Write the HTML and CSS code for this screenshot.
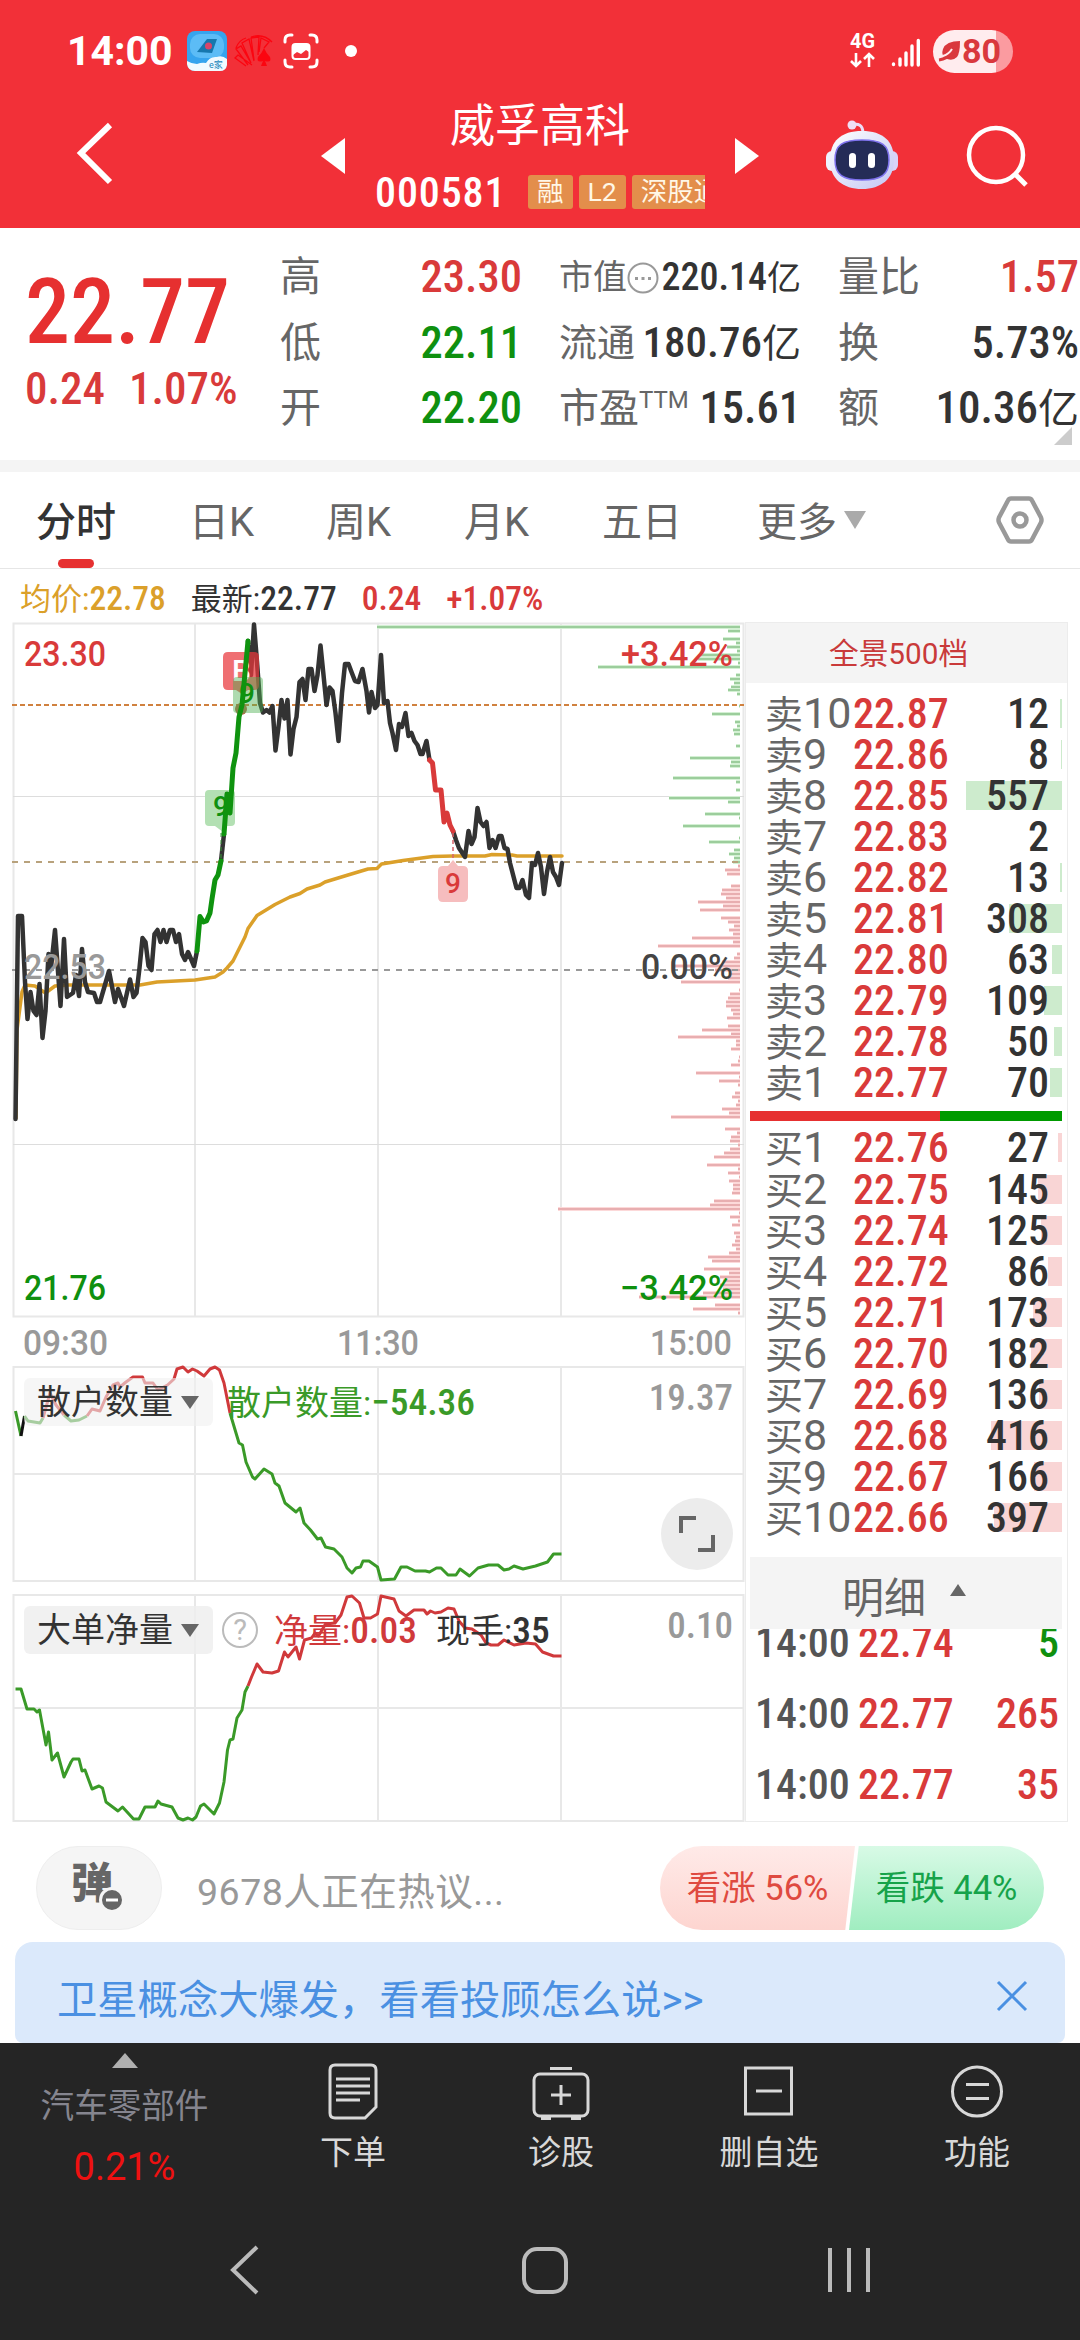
FILE: index.html
```html
<!DOCTYPE html>
<html lang="zh-CN">
<head>
  <meta charset="UTF-8">
  <title>威孚高科 000581</title>
  <link rel="stylesheet" href="styles.css">
</head>
<body>
  <header class="header">
    <div class="status">
      <span class="clock">14:00</span>
      <svg class="app-icon" width="40" height="40" viewBox="0 0 40 40">
        <rect width="40" height="40" rx="8" fill="#36a4ee"/>
        <rect x="3" y="3" width="34" height="24" rx="10" fill="#5cbcf6"/>
        <path d="M10 21 20 8h10l-5 14z" fill="#1677ae"/>
        <circle cx="21.500" cy="15" r="3.500" fill="#d8466a"/>
        <path d="M0 30q5 3 10 3 5-2 9-1 4-7 11-6 5-2 10 2v6q-1 6-7 6H8q-7 0-8-7z" fill="#f1faff"/>
        <text x="22" y="37" font-size="9" fill="#1a86ba">e家</text>
      </svg>
      <svg class="cards-icon" width="40" height="34" viewBox="0 0 40 34" fill="none" stroke="#fb0510" stroke-width="1.300">
        <path d="M12 32 1 24l3-3 14 10M14 31 2 15l5-3 10 17M17 29 8 9l7-4 5 22M20 26 17 4l8-1-1 18M25 18l2-14 8 4-5 6M17 3q12-4 21 5M2 14Q5 6 12 4"/>
        <path d="M30 14q-2 5-6 9-2 6 5 4l-2 5h6l-2-5q7 2 5-4-4-4-6-9z" fill="#fb0510" stroke="none"/>
      </svg>
      <svg class="shot-icon" width="36" height="36" viewBox="0 0 36 36" fill="none" stroke="#fff" stroke-width="3" stroke-linecap="round">
        <path d="M2 9V7q0-5 5-5h2M27 2h2q5 0 5 5v2M34 27v2q0 5-5 5h-2M9 34H7q-5 0-5-5v-2"/>
        <rect x="9.500" y="11" width="17" height="15" rx="3" stroke-width="2"/>
        <path d="M10 12h16v7l-3-2-5 4-4-2-4 3z" fill="#fff" stroke="none"/>
      </svg>
      <i class="dot"></i>
      <svg class="net" width="26" height="36" viewBox="0 0 26 36">
        <text x="0" y="15" font-size="20" font-weight="700" fill="#fff" textLength="25" lengthAdjust="spacingAndGlyphs">4G</text>
        <path d="M6 20v13M1 28l5 5 5-5M19 34V21M14 26l5-5 5 5" fill="none" stroke="#fff" stroke-width="2.600"/>
      </svg>
      <svg class="signal" width="30" height="30" viewBox="0 0 30 30" stroke="#fff" stroke-width="3.400" stroke-linecap="round">
        <path d="M2.500 26v.5M9 21v6M15 15v12M21 8v19M27.300 2.500v24.500"/>
      </svg>
      <div class="battery">
        <svg width="24" height="22" viewBox="0 0 24 22">
          <path d="M22 1q0 12-3 16-5 5-12 1-4-3-2-9 3-8 17-8z" fill="#d9383d"/>
          <path d="M1 20q8-1 15-9" fill="none" stroke="#d9383d" stroke-width="3"/>
          <path d="M5 16q6-2 9-7" fill="none" stroke="#ffecee" stroke-width="2"/>
        </svg>
        <span>80</span>
      </div>
    </div>
    <div class="nav">
      <svg class="back" width="44" height="68" viewBox="0 0 44 68"><path d="M37 6 8 34l29 29" fill="none" stroke="#fff" stroke-width="6"/></svg>
      <svg class="prev" width="24" height="36" viewBox="0 0 24 36"><path d="M24 0v36L0 18z" fill="#fff"/></svg>
      <div class="stock">
        <h1>威孚高科</h1>
        <div class="stock-sub">
          <span class="code">000581</span>
          <span class="tag">融</span><span class="tag">L2</span><span class="tag">深股通</span>
        </div>
      </div>
      <svg class="next" width="24" height="36" viewBox="0 0 24 36"><path d="M0 0v36l24-18z" fill="#fff"/></svg>
      <svg class="robot" width="74" height="72" viewBox="0 0 74 72">
        <defs>
          <linearGradient id="shell" x1="0" y1="0" x2="1" y2="1"><stop offset="0" stop-color="#fff"/><stop offset="1" stop-color="#c3c6f3"/></linearGradient>
        </defs>
        <path d="M27 7q10-3 11 7" fill="none" stroke="#ecdcf6" stroke-width="3"/>
        <circle cx="27" cy="7" r="4.500" fill="#f0dff5"/>
        <rect x="1" y="33" width="12" height="20" rx="6" fill="#eef3ff"/>
        <rect x="61" y="33" width="12" height="20" rx="6" fill="#d9d3f8"/>
        <path d="M37 13c21 0 32 10 32 29S56 71 37 71 5 61 5 42s11-29 32-29z" fill="url(#shell)"/>
        <path d="M37 22c20 0 27 5 27 20s-8 20-27 20-27-5-27-20 7-20 27-20z" fill="#242c57" stroke="#7f73ee" stroke-width="1.500"/>
        <rect x="24" y="35" width="7" height="15" rx="3.500" fill="#fff"/>
        <rect x="43" y="35" width="7" height="15" rx="3.500" fill="#fff"/>
      </svg>
      <svg class="search" width="64" height="64" viewBox="0 0 64 64" fill="none" stroke="#fff" stroke-width="4.500"><circle cx="30" cy="31" r="27"/><path d="M49 50l11 11" stroke-width="5"/></svg>
    </div>
  </header>

  <section class="quote">
    <div class="quote-main">
      <div class="price num">22.77</div>
      <div class="change num"><span>0.24</span><span>1.07%</span></div>
    </div>
    <dl class="quote-col c1">
      <dt>高</dt><dd class="num up">23.30</dd>
      <dt>低</dt><dd class="num down">22.11</dd>
      <dt>开</dt><dd class="num down">22.20</dd>
    </dl>
    <dl class="quote-col c2">
      <dt class="cap">市值<svg width="32" height="32" viewBox="0 0 32 32"><circle cx="16" cy="16" r="14.500" fill="none" stroke="#999" stroke-width="2"/><path d="M8 15h3v3H8zM14.500 15h3v3h-3zM21 15h3v3h-3z" fill="#999"/></svg></dt><dd class="cap"><b class="num">220.14</b>亿</dd>
      <dt class="mid">流通</dt><dd class="mid"><b class="num">180.76</b>亿</dd>
      <dt>市盈<sup>TTM</sup></dt><dd class="num pe">15.61</dd>
    </dl>
    <dl class="quote-col c3">
      <dt>量比</dt><dd class="num up">1.57</dd>
      <dt>换</dt><dd class="num">5.73%</dd>
      <dt>额</dt><dd><b class="num">10.36</b>亿</dd>
    </dl>
    <i class="corner"></i>
  </section>

  <nav class="tabs">
    <span class="tab active">分时</span>
    <span class="tab">日K</span>
    <span class="tab">周K</span>
    <span class="tab">月K</span>
    <span class="tab">五日</span>
    <span class="tab more">更多<i></i></span>
    <svg class="gear" width="50" height="50" viewBox="0 0 50 50" fill="none" stroke="#999" stroke-width="4.500" stroke-linejoin="round"><path d="M16 3.500h18q2 0 3 2l9 17q1 2.500 0 5l-9 17q-1 2-3 2H16q-2 0-3-2l-9-17q-1-2.500 0-5l9-17q1-2 3-2z"/><circle cx="25" cy="25" r="6.500"/></svg>
  </nav>

  <main class="market">
    <section class="charts">
      <div class="legend">
        <span class="avg">均价:<b class="num">22.78</b></span>
        <span>最新:<b class="num">22.77</b></span>
        <b class="num up">0.24</b>
        <b class="num up">+1.07%</b>
      </div>

      <svg class="chart-main" width="733" height="744" viewBox="12 622 733 744">
        <path class="grid" d="M13.500 623.500H743.500V1316.500H13.500zM195 623V1316M378 623V1316M561 623V1316"/>
        <path class="grid thin" d="M13 796.500H744M13 1144.500H744"/>
        <g id="volume"></g>
        <path class="dash orange" d="M12 705H744"/>
        <path class="dash tan" d="M12 862H744"/>
        <path class="dash grey" d="M12 970H744"/>

        <polyline class="line avg-line" points="16,1118 17,1030 22,992 25,985 35,986 45.500,993 55,986 67,985 140,985 157,982 195,980 215,977 223,972 227,968 233,961 245,937 248,928.500 257,915.500 275,904.500 290,897 300,893.500 307,889 320,885 325,882 348,875 368,869 377,868.500 381.500,864 403,860.500 433,856.500 453,856 485,856 492,854.500 512,855 517,856 562,856"/>
        <polyline class="line" points="15.500,1119 18,916 22,916 25,982 27.500,1019 30.500,992 33.500,1011 36.500,1015 39.500,984 42.500,1038 45.500,1011 48.500,954 51,968 55,930 60.500,1006 64,939 67,997 73,993 76,975 79,996 82,949 85,982 88,992 94,993 97,1002 100,1002 109,971 115,1002 118,989 124,1006 130,979.500 133.500,997 136.500,993 139.500,968 142.500,938 145.500,942 148.500,966 151.500,970 154.500,934 157.500,930 160.500,942 163.500,930 166.500,942 170,930 173,930 176,942 179,934 182,954 185,960 188,952 194,966 197,951"/>
        <polyline class="line" points="221,861 224,834"/>
        <polyline class="line" points="248,641 251,675 254,624.500 257,662 260,703 263,712.500 266.500,710 269.500,712.500 272.500,706 275.500,750.500 278.500,727 281.500,700 284.500,718.500 287.500,700 290.500,754.500 293.500,729 296.500,717 299.500,682 302.500,679 305.500,700 308.500,669 311.500,669 314.500,691 317.500,675 320.500,645.500 323.500,675 326.500,705 329.500,687.500 332.500,691 335.500,713 338.500,741 342,693 345,664 348.500,664 351.500,672 355,681 358.500,682 362.500,669 366.500,691 369,712.500 371.500,692 375,708 377.500,705 381,655 384,703 387.500,701 390,723 392.500,733 396,750 399,724 402,727 405.500,713 408.500,736 411.500,733 414.500,741 417.500,745 420.500,754 422.500,754 426.500,741 429.500,760"/>
        <polyline class="line" points="453,831 456,840 459,848 465,857 468.500,831 471.500,844 474.500,837 477.500,808 480.500,822 483.500,826 486.500,822 489.500,848 492.500,840 495.500,848 499,836 501.500,836 504.500,848 507.500,849 510,863 516.500,888 519.500,888 522.500,880 526,895 529,898 532,863 535,865 538,853 541,867 544,894 547,872 550,857 553,872 556,877 559,885 562,863"/>

        <path d="M228 652h26q5 0 5 5v28q0 5-5 5h-6l-6 4-6-4h-8q-5 0-5-5v-28q0-5 5-5z" fill="#e9383c" opacity=".72"/>
        <text x="232" y="681" font-size="30" font-weight="500" fill="#fff">B</text>
        <circle cx="241" cy="709" r="6" fill="#b06a48"/>
        <rect x="233" y="677" width="30" height="36" rx="4" fill="#4caf50" opacity=".45"/>
        <path d="M209 790h22q4 0 4 4v28q0 4-4 4h-8v6l-8-6h-6q-4 0-4-4v-28q0-4 4-4z" fill="#b3e0b3"/>
        <path d="M221 833v28" stroke="#3a9a3a" stroke-dasharray="4 3"/>
        <text class="mark green" x="213" y="816">9</text>
        <text class="mark green" x="239" y="703">9</text>

        <polyline class="line rise" points="197,951 200,916.500 203.500,922 206.500,921 210,913 212,899 215,880 218,875 221,861"/>
        <polyline class="line rise" points="224,834 227,794 230,813 233,768 236,753 239,717 242,705 248,641"/>
        <polyline class="line fall" points="429.500,760 432.500,763 435.500,790 441,790 444,822 447,813 450,825 453,831"/>

        <path d="M453 833v28" stroke="#d8636a" stroke-dasharray="4 3" stroke-width="1.500"/>
        <path d="M443 866h5l5-6 5 6h5q5 0 5 5v26q0 5-5 5h-20q-5 0-5-5v-26q0-5 5-5z" fill="#f6bdbe"/>
        <text class="mark red" x="445" y="893">9</text>

        <text class="axis red" x="24" y="666" textLength="82" lengthAdjust="spacingAndGlyphs">23.30</text>
        <text class="axis grey" x="24" y="979" textLength="82" lengthAdjust="spacingAndGlyphs">22.53</text>
        <text class="axis green" x="24" y="1300" textLength="82" lengthAdjust="spacingAndGlyphs">21.76</text>
        <text class="axis red" x="621" y="666" textLength="112" lengthAdjust="spacingAndGlyphs">+3.42%</text>
        <text class="axis dark" x="641" y="979" textLength="92" lengthAdjust="spacingAndGlyphs">0.00%</text>
        <text class="axis green" x="620" y="1300" textLength="113" lengthAdjust="spacingAndGlyphs">−3.42%</text>
        <text class="axis grey" x="23" y="1355" textLength="85" lengthAdjust="spacingAndGlyphs">09:30</text>
        <text class="axis grey" x="337" y="1355" textLength="82" lengthAdjust="spacingAndGlyphs">11:30</text>
        <text class="axis grey" x="650" y="1355" textLength="82" lengthAdjust="spacingAndGlyphs">15:00</text>
      </svg>

      <div class="indicator first">
        <svg width="733" height="217" viewBox="12 1366 733 217">
          <path class="grid" d="M13.500 1367H743.500V1581H13.500zM13 1474H744M195 1367V1581M378 1367V1581M561 1367V1581"/>
          <polyline class="thinline g" points="15.500,1411 21,1436"/>
          <polyline class="thinline k" points="21,1436 24.500,1416"/>
          <polyline class="thinline g" points="24.500,1416 28,1421 40,1423 43,1418"/>
          <polyline class="thinline g" points="64,1415 71,1421 79,1420 87,1416"/>
          <polyline class="thinline r" points="43,1418 50,1393 56,1405 64,1415"/>
          <polyline class="thinline r" points="87,1416 92,1409 100,1411 106,1397 113,1385 118,1383 120,1387 126,1382 133,1377 142.500,1377 145,1383 153,1383 158,1390 167.500,1385 174,1379 177,1369 183,1367 188,1372 192.500,1369 197,1371 204,1376 210,1369 215,1367 219.500,1370 224,1383 230,1413"/>
          <polyline class="thinline g" points="230,1413 234.500,1428 239,1443 242.500,1445 246,1462 252.500,1477 255,1479 259.500,1474 264,1469 272,1474 275,1483 279,1486 285,1503 296,1512 300,1508 304,1523 310.500,1530 317.500,1539 321,1538 325.500,1547 334,1549 342,1557 347,1568 352,1573 356,1568 360.500,1567 363,1561 369,1561 377.500,1567 381,1580 394.500,1579 401,1567 407,1567 415,1571 425.500,1571 429.500,1572 436.500,1568 441,1568 448,1575 456,1575 460,1569 469.500,1576 478,1568 488.500,1565 498,1565 504,1570 509,1569 514,1566 523,1569 535.500,1566 547.500,1562 553.500,1554 561.500,1554"/>
        </svg>
        <div class="ind-bar">
          <span class="picker">散户数量<i></i></span>
          <span class="ind-val retail">散户数量:<b class="num">−54.36</b></span>
          <span class="ind-max num">19.37</span>
        </div>
        <div class="expand"><svg width="36" height="36" viewBox="0 0 36 36" fill="none" stroke="#666" stroke-width="4"><path d="M2 17V2h15M34 19v15H19"/></svg></div>
      </div>

      <div class="indicator second">
        <svg width="733" height="229" viewBox="12 1594 733 229">
          <path class="grid" d="M13.500 1595H743.500V1821H13.500zM13 1708H744M195 1595V1821M378 1595V1821M561 1595V1821"/>
          <polyline class="thinline g" points="15.500,1689 21,1689 27,1709 34,1709 37,1712 39.500,1710 46,1745 48.500,1732 52,1760 57.500,1753 64,1777 71,1762 73,1759 79,1759 82,1771 85,1770 92,1789 99,1786 102.500,1788 106,1802 118,1811 122.500,1807 133.500,1819 139,1819 145,1807 155,1807 158,1801 161,1804 172,1807 178,1818 183,1820 188,1818 192.500,1820 196,1817 200.500,1806 204,1804 214,1814 219.500,1803 224,1782 227.500,1750 230,1740 233,1739 237,1718 242,1710 245,1692 248,1686"/>
          <polyline class="thinline r" points="248,1686 251.500,1677 257,1664 263,1672 272,1673 278.500,1671 284.500,1652 288,1657 296,1647 299.500,1659 304.500,1640 311.500,1638 315,1633 318.500,1636 325.500,1624 335,1623 341,1615 347,1597 352,1596 359.500,1603 364,1618 370.500,1618 377.500,1614 381,1596 394,1599 399,1611 406,1616 414,1610 424,1610 427,1614 430.500,1611 435,1613 441,1612 448,1608 454,1609 459,1621 465,1628 472,1629 481,1635 486,1643 491,1645 498,1645 504,1640 514,1645 526,1643 535.500,1644 542.500,1652 553.500,1656 561.500,1656"/>
        </svg>
        <div class="ind-bar">
          <span class="picker">大单净量<i></i></span>
          <span class="help">?</span>
          <span class="ind-val net-vol">净量:<b class="num">0.03</b></span>
          <span class="ind-val hand">现手:<b class="num">35</b></span>
          <span class="ind-max num">0.10</span>
        </div>
      </div>
    </section>

    <aside class="book">
      <div class="book-head">全景500档</div>
      <div class="levels" id="asks"></div>
      <div class="ratio"><i></i></div>
      <div class="levels" id="bids"></div>
      <div class="detail-head">明细<i></i></div>
      <div class="ticks">
        <div class="tick"><span class="num">14:00</span><span class="num up">22.74</span><span class="num down">5</span></div>
        <div class="tick"><span class="num">14:00</span><span class="num up">22.77</span><span class="num up">265</span></div>
        <div class="tick"><span class="num">14:00</span><span class="num up">22.77</span><span class="num up">35</span></div>
      </div>
    </aside>
  </main>

  <section class="talk">
    <div class="danmu">弹<svg width="26" height="26" viewBox="0 0 26 26"><circle cx="13" cy="13" r="11.500" fill="#666" stroke="#f5f5f5" stroke-width="3"/><path d="M7 13h12" stroke="#fff" stroke-width="3"/></svg></div>
    <span class="talk-text">9678人正在热议...</span>
    <div class="votes">
      <span class="vote bull">看涨 56%</span>
      <span class="vote bear">看跌 44%</span>
    </div>
  </section>

  <section class="banner">
    <span>卫星概念大爆发，看看投顾怎么说&gt;&gt;</span>
    <svg width="32" height="32" viewBox="0 0 32 32"><path d="M2 2l28 28M30 2 2 30" stroke="#4a90e2" stroke-width="3"/></svg>
  </section>

  <footer class="toolbar">
    <div class="tools">
      <div class="sector">
        <i></i>
        <span>汽车零部件</span>
        <b>0.21%</b>
      </div>
      <div class="tool">
        <svg width="60" height="60" viewBox="0 0 60 60"><path d="M12 4h36q5 0 5 5v37L42 57H12q-5 0-5-5V9q0-5 5-5z"/><path d="M13 18h34M13 25h34M13 32h34M13 39h24"/></svg>
        <span>下单</span>
      </div>
      <div class="tool">
        <svg width="60" height="60" viewBox="0 0 60 60"><rect x="3" y="13" width="54" height="42" rx="6"/><path d="M19 7.500h22M30 24v20M20 34h20M10 57.500h10M40 57.500h10"/></svg>
        <span>诊股</span>
      </div>
      <div class="tool">
        <svg width="60" height="60" viewBox="0 0 60 60"><rect x="6.500" y="7" width="46" height="46"/><path d="M17 30h26"/></svg>
        <span>删自选</span>
      </div>
      <div class="tool">
        <svg width="60" height="60" viewBox="0 0 60 60"><circle cx="30" cy="30.500" r="24.500"/><path d="M19 23.500h23M19 37.500h23"/></svg>
        <span>功能</span>
      </div>
    </div>
    <div class="sysnav">
      <svg width="30" height="50" viewBox="0 0 30 50"><path d="M27 2 3 25l24 23"/></svg>
      <svg class="home" width="50" height="50" viewBox="0 0 50 50"><rect x="4" y="4" width="42" height="43" rx="13"/></svg>
      <svg width="50" height="50" viewBox="0 0 50 50"><path d="M6 3v44M25 3v44M44 3v44"/></svg>
    </div>
  </footer>

  <script src="app.js"></script>
</body>
</html>
```
FILE: styles.css
```css
* {
  box-sizing: border-box;
}
body {
  margin: 0;
  width: 1080px;
  height: 2340px;
  overflow: hidden;
  background: #fff;
  color: #333;
  font-family: Roboto, "Noto Sans CJK SC", sans-serif;
}
svg {
  display: block;
  flex: none;
  overflow: visible;
}
i {
  display: block;
  flex: none;
}
h1, dl, dd {
  margin: 0;
}
.num {
  font-family: Roboto, sans-serif;
  font-weight: 500;
  font-stretch: 87%;
}
.up { color: #d93a3a; }
.down { color: #0f900f; }

/* header */
.header {
  height: 228px;
  background: #f23038;
  color: #fff;
}
.status {
  display: flex;
  height: 102px;
  align-items: center;
  padding: 0 67px;
}
.clock {
  width: 120px;
  font-size: 41px;
  font-weight: 700;
}
.cards-icon { margin-left: 7px; }
.shot-icon { margin-left: 9px; }
.dot {
  width: 12px;
  height: 12px;
  margin-left: 26px;
  border-radius: 50%;
  background: #fff;
}
.net { margin-left: auto; }
.signal { margin: 4px 12px 0 15px; }
.battery {
  display: flex;
  align-items: center;
  width: 80px;
  height: 43px;
  padding-left: 5px;
  border-radius: 22px;
  background: linear-gradient(90deg, #ffecee 63px, #fb9ba0 63px);
  color: #d9383d;
  font-size: 34px;
  font-weight: 700;
}
.nav {
  display: flex;
  height: 126px;
}
.back { margin: 17px 0 0 73px; }
.prev { margin: 36px 0 0 204px; }
.stock {
  width: 360px;
  margin-left: 15px;
  flex: none;
}
.stock h1 {
  height: 66px;
  margin-top: -6px;
  font-size: 45px;
  font-weight: 400;
  line-height: 62px;
  text-align: center;
}
.stock-sub {
  display: flex;
  width: 345px;
  height: 34px;
  margin-top: 13px;
  padding-left: 15px;
  gap: 6px;
  overflow: hidden;
}
.code {
  width: 147px;
  flex: none;
  font-size: 42px;
  font-weight: 500;
  font-stretch: 87%;
  letter-spacing: 0.9px;
  line-height: 35px;
}
.tag {
  flex: none;
  padding: 0 9px;
  border-radius: 3px;
  background: #e38e4b;
  color: #fff7e6;
  font-size: 26.5px;
  line-height: 34px;
}
.next { margin: 36px 0 0 15px; }
.robot { margin: 16px 0 0 66px; }
.search { margin: 22px 0 0 67px; }

/* quote */
.quote {
  position: relative;
  display: flex;
  height: 244px;
  padding-top: 17px;
  border-bottom: 12px solid #f4f4f4;
}
.quote-main {
  width: 280px;
  padding: 16px 0 0 25px;
  color: #d93a3a;
}
.price {
  height: 104px;
  color: #e63030;
  font-size: 90px;
  line-height: 104px;
}
.change {
  display: flex;
  gap: 24px;
  margin-top: 2px;
  font-size: 45px;
  line-height: 44px;
}
.quote-col {
  display: grid;
  grid-template-columns: auto 1fr;
  grid-auto-rows: 65.5px;
  align-items: center;
  font-size: 44.5px;
  line-height: 65px;
  white-space: nowrap;
}
.quote-col dt {
  color: #666;
  font-size: 41px;
}
.quote-col dd {
  text-align: right;
}
.c1 { width: 242px; }
.c2 { width: 242px; margin-left: 37px; }
.c3 { width: 241px; margin-left: 37px; }
.c2 {
  flex: none;
  grid-template-columns: auto 1fr;
}
.c2 dt { font-size: 40px; }
.c2 dt.cap {
  display: flex;
  align-items: center;
  font-size: 34px;
}
.c2 dt.mid { font-size: 38px; }
.c2 dd.cap { font-size: 34px; }
.c2 dd.cap .num { font-size: 38px; }
.c2 dd.mid { font-size: 39px; }
.c2 dd.mid .num { font-size: 43px; }
.c2 dd { margin-left: -60px; }
.c3 dd:last-child { font-size: 41px; }
.c3 dd .num { font-size: 45px; }
.c2 sup {
  font-size: 24px;
  line-height: 0;
}
.corner {
  position: absolute;
  right: 8px;
  bottom: 15px;
  border-left: 18px solid transparent;
  border-bottom: 18px solid #ccc;
}

/* tabs */
.tabs {
  display: flex;
  height: 97px;
  padding-left: 36px;
  border-bottom: 1px solid #e6e6e6;
  color: #666;
  font-size: 40px;
  line-height: 102px;
}
.tab { width: 138px; flex: none; }
.tab:first-child { width: 153px; }
.tab:nth-child(2) { width: 137px; }
.tab:nth-child(5) { width: 155px; }
.tab.active {
  position: relative;
  color: #333;
  font-weight: 500;
}
.tab.active::after {
  content: "";
  position: absolute;
  left: 22px;
  bottom: 0;
  width: 36px;
  height: 9px;
  border-radius: 5px;
  background: #e63030;
}
.more {
  display: flex;
  width: 238px;
}
.more i {
  margin: 39px 0 0 7px;
  border: 11px solid transparent;
  border-top: 18px solid #aaa;
  border-bottom: 0;
  height: 0;
}
.gear { margin-top: 23px; }

/* charts */
.market {
  display: flex;
  height: 1253px;
}
.charts {
  width: 745px;
  padding-left: 12px;
}
.legend {
  display: flex;
  height: 53px;
  padding-left: 8px;
  gap: 25px;
  font-size: 31px;
  line-height: 60px;
}
.legend .num { font-size: 33.5px; }
.legend .avg { color: #dba02a; }
.grid {
  fill: none;
  stroke: #e8e8e8;
  stroke-width: 2;
}
.thin { stroke-width: 1; stroke: #ddd; }
.dash {
  fill: none;
  stroke-width: 2;
  stroke-dasharray: 6 6;
}
.orange { stroke: #d0813f; stroke-dasharray: 5 3; }
.tan { stroke: #b8a27c; }
.dash.grey { stroke: #999; }
.line {
  fill: none;
  stroke: #333;
  stroke-width: 4.5;
  stroke-linejoin: round;
  stroke-linecap: round;
}
.avg-line { stroke: #dba02a; stroke-width: 3.5; }
.rise { stroke: #0f930f; stroke-width: 5; }
.fall { stroke: #d93a3a; stroke-width: 5; }
.axis, .mark {
  font-family: Roboto, sans-serif;
  font-size: 35px;
  font-weight: 500;
}
.mark { font-size: 28px; }
text.red { fill: #d93a3a; }
text.green { fill: #0f900f; }
text.grey { fill: #999; }
text.dark { fill: #444; }
.thinline {
  fill: none;
  stroke-width: 3;
  stroke-linejoin: round;
}
.g { stroke: #3a9a28; }
.r { stroke: #d0393b; }
.k { stroke: #111; }
.indicator { position: relative; }
.second { margin-top: 11px; }
.ind-bar {
  position: absolute;
  top: 12px;
  left: 12px;
  right: 0;
  display: flex;
  height: 48px;
  align-items: center;
  font-size: 34px;
  line-height: 50px;
  white-space: nowrap;
}
.picker {
  display: flex;
  width: 189px;
  height: 48px;
  flex: none;
  padding-left: 13px;
  align-items: center;
  border-radius: 6px;
  background: rgba(238, 238, 238, .8);
  color: #333;
  font-size: 34px;
}
.first .picker { background: rgba(240, 240, 240, .6); }
.picker i {
  margin-left: 8px;
  border: 9px solid transparent;
  border-top: 13px solid #666;
  border-bottom: 0;
}
.ind-bar .num { font-size: 37.5px; }
.retail { margin-left: 14px; color: #3a9a28; }
.help {
  width: 36px;
  height: 36px;
  margin-left: 9px;
  border: 2px solid #bbb;
  border-radius: 50%;
  color: #bbb;
  font-size: 29px;
  line-height: 33px;
  text-align: center;
}
.net-vol { margin-left: 16px; color: #d0393b; }
.hand { margin-left: 19px; }
.ind-bar .ind-max {
  margin: -8px 12px 0 auto;
  color: #999;
  font-size: 37px;
}
.expand {
  position: absolute;
  right: 12px;
  top: 132px;
  display: flex;
  width: 72px;
  height: 72px;
  align-items: center;
  justify-content: center;
  border-radius: 50%;
  background: #ececec;
}

/* order book */
.book {
  width: 323px;
  height: 1200px;
  margin-top: 53px;
  border: 1px solid #ececec;
  padding: 0 5px 0 4px;
}
.book-head {
  height: 60px;
  margin: 0 -5px 0 -4px;
  background: #f4f4f4;
  color: #c93a3a;
  font-size: 29.7px;
  line-height: 62px;
  padding-left: 83px;
}
.levels {
  padding-top: 9px;
}
#bids { padding-top: 5px; }
.level {
  position: relative;
  display: grid;
  grid-template-columns: 88px 100px 1fr;
  height: 41.05px;
  padding: 0 13px 0 15px;
  line-height: 43px;
  white-space: nowrap;
}
.level > * { position: relative; }
.level .label {
  color: #666;
  font-size: 38px;
}
.level .label b {
  font-size: 43px;
  font-weight: 400;
}
.level .num {
  font-size: 42px;
}
.level .qty { text-align: right; }
.level .bar {
  position: absolute;
  right: 0;
  top: 7px;
  height: 29px;
  background: #cdebcd;
}
#bids .bar { background: #f9d5d5; }
.ratio {
  height: 10px;
  margin-top: 9px;
  background: #009a00;
}
.ratio i {
  width: 190px;
  height: 10px;
  background: #e63030;
}
.detail-head {
  display: flex;
  height: 72px;
  margin-top: 20px;
  padding: 3px 0 0 92px;
  align-items: center;
  background: #f4f4f4;
  color: #666;
  font-size: 42px;
}
.detail-head i {
  margin: -8px 0 0 24px;
  border: 8px solid transparent;
  border-bottom: 12px solid #666;
  border-top: 0;
}
.ticks {
  height: 188px;
  overflow: hidden;
}
.tick {
  display: grid;
  grid-template-columns: 103px 100px 1fr;
  height: 71px;
  padding: 0 3px 0 5px;
  color: #555;
  font-size: 42px;
  line-height: 73px;
}
.tick:first-child { margin-top: -23px; }
.tick span:last-child { text-align: right; }

/* discussion */
.talk {
  display: flex;
  height: 120px;
  padding: 24px 36px 12px;
  align-items: center;
}
.danmu {
  position: relative;
  width: 126px;
  height: 84px;
  border: 1px solid #eee;
  border-radius: 42px;
  background: #f5f5f5;
  color: #666;
  font-size: 42px;
  font-weight: 900;
  line-height: 74px;
  padding-left: 34px;
}
.danmu svg {
  position: absolute;
  left: 62px;
  top: 40px;
}
.talk-text {
  margin-left: 35px;
  color: #999;
  font-size: 37.5px;
  letter-spacing: 0.5px;
}
.votes {
  display: flex;
  width: 384px;
  height: 84px;
  margin-left: auto;
  border-radius: 42px;
  overflow: hidden;
  font-size: 34.5px;
  line-height: 84px;
  text-align: center;
}
.vote { width: 195px; }
.bull {
  background: linear-gradient(#ffeae8, #fdd5d0);
  clip-path: polygon(0 0, 100% 0, 95% 100%, 0 100%);
  color: #df4a40;
}
.bear {
  width: 195px;
  margin-left: -6px;
  background: linear-gradient(#d8fae6, #a0edc0);
  clip-path: polygon(5% 0, 100% 0, 100% 100%, 0 100%);
  color: #16a34a;
}
.banner {
  display: flex;
  height: 101px;
  margin: 0 15px;
  padding: 7px 37px 0 42px;
  align-items: center;
  justify-content: space-between;
  border-radius: 18px 18px 8px 8px;
  background: #dbe9fb;
  color: #4a90e2;
  font-size: 40.3px;
}

/* bottom */
.toolbar {
  height: 297px;
  background: #252525;
}
.tools {
  display: grid;
  grid-template-columns: 249px repeat(4, 208px);
  height: 170px;
  color: #d8d8d8;
  font-size: 33px;
}
.sector, .tool {
  display: flex;
  flex-direction: column;
  align-items: center;
}
.sector i {
  margin-top: 10px;
  border: 13px solid transparent;
  border-bottom: 15px solid #b0b0b0;
  border-top: 0;
}
.sector span {
  margin-top: 15px;
  color: #85858f;
  font-size: 33.6px;
  line-height: 48px;
}
.sector b {
  margin-top: 12px;
  color: #ee1111;
  font-size: 38px;
  font-weight: 400;
  line-height: 48px;
}
.tool svg {
  margin-top: 18px;
  fill: none;
  stroke: #d8d8d8;
  stroke-width: 3;
}
.tool span {
  margin-top: 8px;
  line-height: 48px;
}
.sysnav {
  display: flex;
  padding: 32px 206px 0 230px;
  justify-content: space-between;
}
.sysnav svg {
  fill: none;
  stroke: #bbb;
  stroke-width: 4;
}
.sysnav .home { margin-left: 6px; }
```
FILE: app.js
```js
// [y, length] of every price level, growing leftwards from the chart edge
const sold = [[627,363],[631,12],[639,17],[643,4],[647,13],[651,3],[655,40],[659,42],[663,2],[667,142],[675,4],[679,10],[683,6],[687,9],[690,12],[694,3],[706,1],[714,28],[722,5],[726,3],[730,7],[734,6],[746,4],[758,50],[762,9],[766,10],[778,67],[782,4],[790,4],[798,71],[802,12],[814,35],[818,1],[826,57],[838,1],[842,31],[850,6],[854,11],[858,6],[862,7]];
const bought = [[866,2],[870,15],[874,13],[886,9],[890,18],[894,19],[898,14],[902,42],[906,17],[910,40],[918,19],[922,12],[926,6],[930,11],[934,7],[938,48],[942,7],[946,82],[954,3],[958,6],[962,18],[966,68],[970,25],[974,10],[978,12],[982,59],[990,1],[994,10],[998,12],[1002,14],[1006,14],[1010,9],[1014,7],[1018,13],[1026,12],[1030,38],[1034,9],[1037,62],[1041,4],[1045,4],[1049,9],[1057,1],[1061,2],[1065,9],[1073,44],[1077,1],[1081,21],[1085,2],[1093,5],[1097,8],[1101,2],[1105,4],[1109,18],[1113,11],[1117,69],[1129,15],[1133,3],[1137,9],[1141,10],[1145,2],[1149,10],[1153,16],[1157,26],[1165,33],[1169,2],[1173,12],[1177,1],[1181,11],[1185,7],[1189,7],[1193,8],[1201,26],[1205,30],[1209,182],[1213,1],[1217,10],[1221,2],[1225,8],[1233,6],[1237,4],[1241,5],[1245,8],[1249,4],[1253,11],[1257,32],[1261,28],[1269,36],[1273,11],[1277,20],[1281,17],[1285,20],[1289,17],[1293,37],[1297,101],[1305,25],[1309,47],[1313,2]];

function bars(list, light, dark) {
  const d = list.map(([y, w]) => `M740 ${y}h-${w}`).join('');
  return `<path d="${d}" stroke="${light}" stroke-width="4"/><path d="${d}" stroke="${dark}" stroke-width="2"/>`;
}
document.getElementById('volume').innerHTML =
  bars(sold, '#d3f0d3', '#9ccd9c') + bars(bought, '#fcd9d9', '#e8aeb0');

const asks = [[10,'22.87',12],[9,'22.86',8],[8,'22.85',557],[7,'22.83',2],[6,'22.82',13],[5,'22.81',308],[4,'22.80',63],[3,'22.79',109],[2,'22.78',50],[1,'22.77',70]];
const bids = [[1,'22.76',27],[2,'22.75',145],[3,'22.74',125],[4,'22.72',86],[5,'22.71',173],[6,'22.70',182],[7,'22.69',136],[8,'22.68',416],[9,'22.67',166],[10,'22.66',397]];

function fill(id, side, rows) {
  document.getElementById(id).innerHTML = rows.map(([n, price, qty]) => `
    <div class="level">
      <i class="bar" style="width:${Math.floor(qty * 96 / 557)}px"></i>
      <span class="label">${side}<b>${n}</b></span>
      <span class="num up">${price}</span>
      <span class="num qty">${qty}</span>
    </div>`).join('');
}
fill('asks', '卖', asks);
fill('bids', '买', bids);
```
